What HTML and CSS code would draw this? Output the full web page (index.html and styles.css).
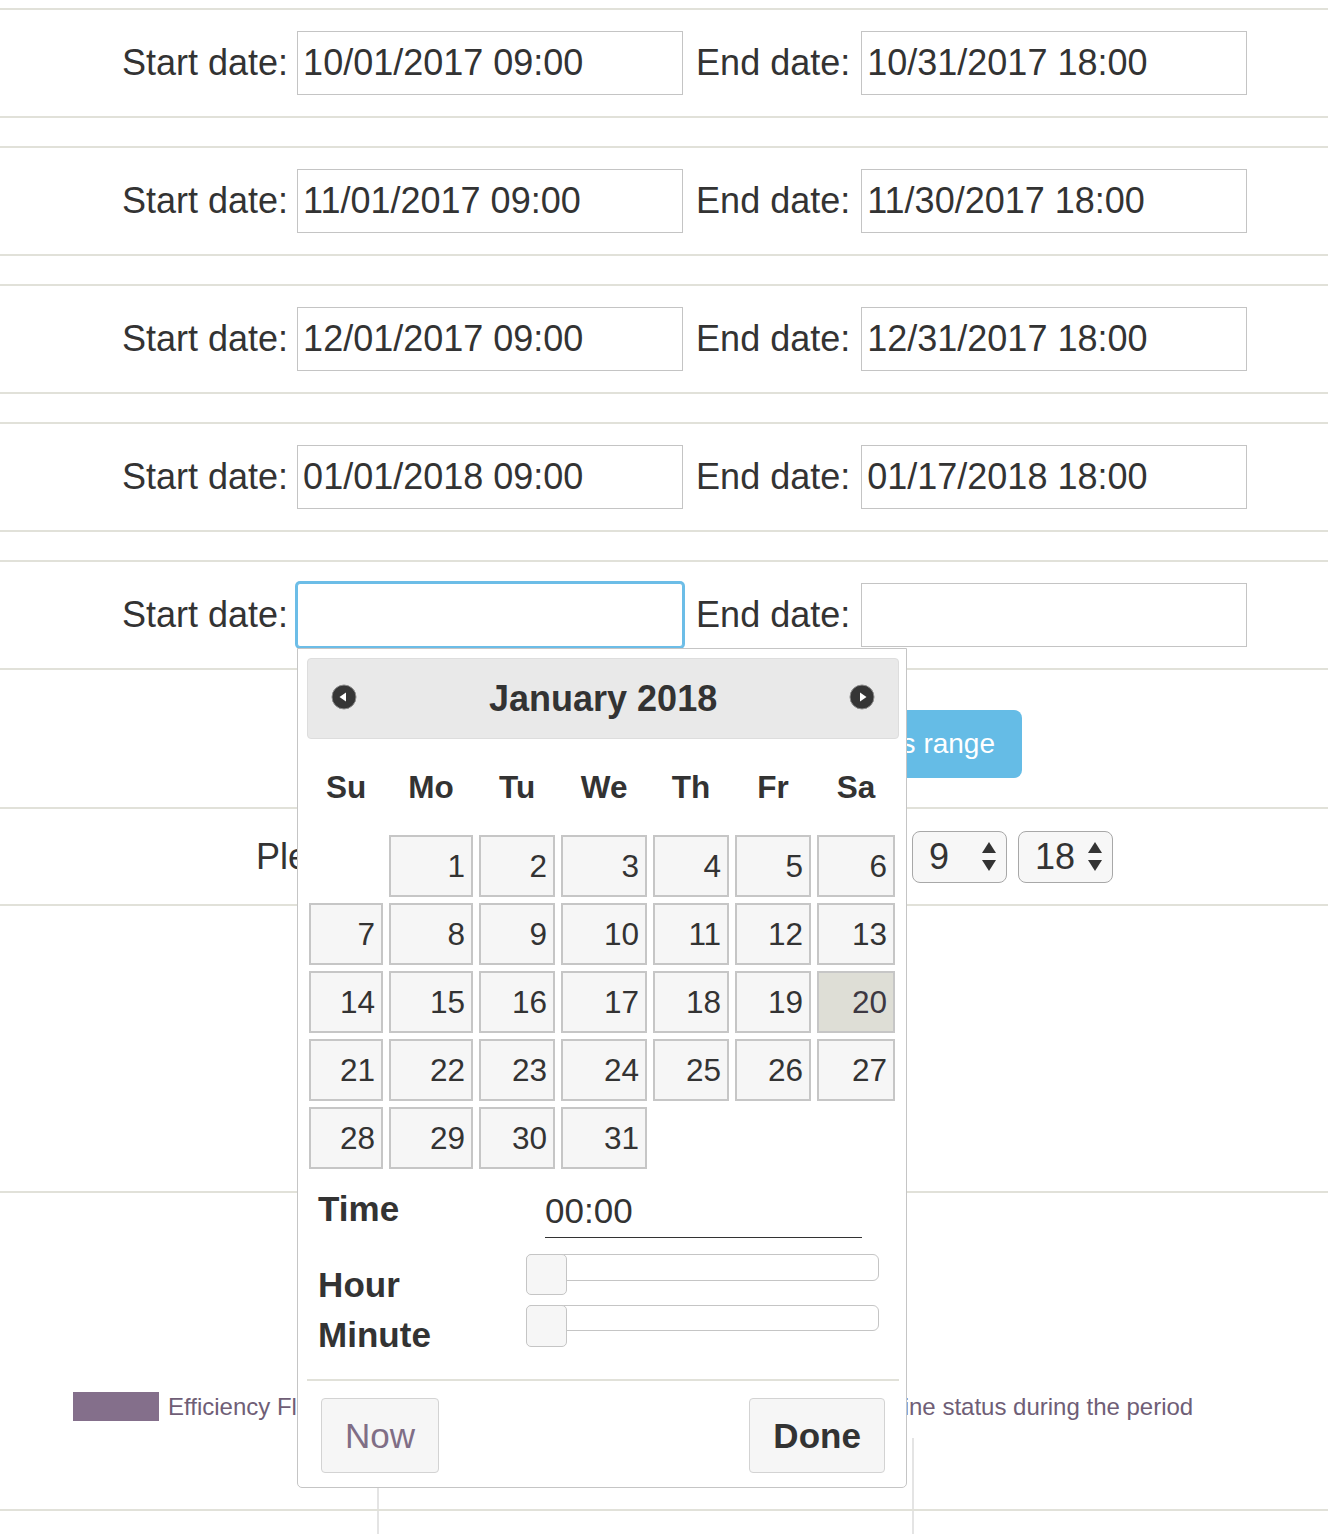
FILE: index.html
```html
<!DOCTYPE html>
<html>
<head>
<meta charset="utf-8">
<link rel="stylesheet" href="styles.css">
</head>
<body>
<div class="page">
  <div class="date-row">
    <span class="field-label">Start date:</span>
    <div class="date-input">10/01/2017 09:00</div>
    <span class="field-label end-label">End date:</span>
    <div class="date-input end-input">10/31/2017 18:00</div>
  </div>
  <div class="date-row">
    <span class="field-label">Start date:</span>
    <div class="date-input">11/01/2017 09:00</div>
    <span class="field-label end-label">End date:</span>
    <div class="date-input end-input">11/30/2017 18:00</div>
  </div>
  <div class="date-row">
    <span class="field-label">Start date:</span>
    <div class="date-input">12/01/2017 09:00</div>
    <span class="field-label end-label">End date:</span>
    <div class="date-input end-input">12/31/2017 18:00</div>
  </div>
  <div class="date-row">
    <span class="field-label">Start date:</span>
    <div class="date-input">01/01/2018 09:00</div>
    <span class="field-label end-label">End date:</span>
    <div class="date-input end-input">01/17/2018 18:00</div>
  </div>
  <div class="date-row last">
    <span class="field-label">Start date:</span>
    <div class="input-wrap">
      <div class="date-input focused"></div>
      <div class="datepicker">
        <div class="dp-header">
          <svg class="dp-nav prev" width="26" height="26" viewBox="0 0 26 26"><circle cx="13" cy="13" r="12" fill="#353535" stroke="#8a8a8a" stroke-width="1"/><polygon points="8.5,13 15,8.5 15,17.5" fill="#ffffff"/></svg>
          <div class="dp-title">January 2018</div>
          <svg class="dp-nav next" width="26" height="26" viewBox="0 0 26 26"><circle cx="13" cy="13" r="12" fill="#353535" stroke="#8a8a8a" stroke-width="1"/><polygon points="17.5,13 11,8.5 11,17.5" fill="#ffffff"/></svg>
        </div>
        <div class="dp-grid">
          <div class="dow">Su</div><div class="dow">Mo</div><div class="dow">Tu</div><div class="dow">We</div><div class="dow">Th</div><div class="dow">Fr</div><div class="dow">Sa</div>
          <div class="blank"></div><div class="day">1</div><div class="day">2</div><div class="day">3</div><div class="day">4</div><div class="day">5</div><div class="day">6</div>
          <div class="day">7</div><div class="day">8</div><div class="day">9</div><div class="day">10</div><div class="day">11</div><div class="day">12</div><div class="day">13</div>
          <div class="day">14</div><div class="day">15</div><div class="day">16</div><div class="day">17</div><div class="day">18</div><div class="day">19</div><div class="day today">20</div>
          <div class="day">21</div><div class="day">22</div><div class="day">23</div><div class="day">24</div><div class="day">25</div><div class="day">26</div><div class="day">27</div>
          <div class="day">28</div><div class="day">29</div><div class="day">30</div><div class="day">31</div><div class="blank"></div><div class="blank"></div><div class="blank"></div>
        </div>
        <div class="tp">
          <div class="tp-row tp-time">
            <div class="tp-label tp-time-label">Time</div>
            <div class="tp-value">00:00</div>
          </div>
          <div class="tp-row tp-sliders">
            <div class="tp-labels">
              <div class="tp-line">Hour</div>
              <div class="tp-line">Minute</div>
            </div>
            <div class="tp-slider-col">
              <div class="slider first"><div class="track"></div><div class="handle"></div></div>
              <div class="slider second"><div class="track"></div><div class="handle"></div></div>
            </div>
          </div>
        </div>
        <div class="dp-sep"></div>
        <div class="dp-buttons">
          <div class="dp-btn now">Now</div>
          <div class="dp-btn done">Done</div>
        </div>
      </div>
    </div>
    <span class="field-label end-label">End date:</span>
    <div class="date-input end-input"></div>
  </div>
  <div class="btn-row">
    <div class="btn-range">Calculate this range</div>
  </div>
  <div class="hours-row">
    <span class="hours-label">Please select the daily working hours:</span>
    <div class="spin first"><span class="spin-val">9</span><svg class="spin-arrows" width="16" height="32" viewBox="0 0 16 32"><polygon points="8,1 15,12 1,12" fill="#333"/><polygon points="1,19 15,19 8,30" fill="#333"/></svg></div>
    <div class="spin second"><span class="spin-val">18</span><svg class="spin-arrows" width="16" height="32" viewBox="0 0 16 32"><polygon points="8,1 15,12 1,12" fill="#333"/><polygon points="1,19 15,19 8,30" fill="#333"/></svg></div>
  </div>
  <div class="empty-row"></div>
  <div class="legend-row">
    <div class="legend">
      <div class="legend-item first"><span class="swatch"></span><span class="legend-text">Efficiency Flow</span></div>
      <div class="legend-item"><span class="swatch"></span><span class="legend-text">Machine status during the period</span></div>
    </div>
    <div class="chart">
      <div class="vline v1"></div>
      <div class="vline v2"></div>
      <div class="hline"></div>
    </div>
  </div>
</div>
</body>
</html>
```

FILE: styles.css
```css
html, body {
  margin: 0;
  padding: 0;
  overflow: hidden;
  background: #ffffff;
}
body {
  font-family: "Liberation Sans", Arial, Helvetica, sans-serif;
  color: #333333;
}
.page {
  width: 1328px;
  padding-top: 8px;
}

/* date rows */
.date-row {
  box-sizing: border-box;
  height: 110px;
  border-top: 2px solid #e1e1d9;
  border-bottom: 2px solid #e1e1d9;
  margin-bottom: 28px;
  display: flex;
  align-items: center;
  padding-left: 122px;
  font-size: 36px;
}
.date-row.last {
  margin-bottom: 0;
}
.field-label {
  white-space: nowrap;
}
.end-label {
  margin-left: 13px;
}
.date-input {
  box-sizing: border-box;
  width: 386px;
  height: 64px;
  border: 1px solid #c4c4c4;
  padding: 0 5px;
  margin-left: 9px;
  line-height: 62px;
  white-space: nowrap;
  background: #ffffff;
}
.date-input.end-input {
  margin-left: 11px;
}
.input-wrap {
  position: relative;
  margin-left: 9px;
  width: 386px;
  height: 64px;
}
.input-wrap .date-input {
  margin-left: 0;
}
.date-input.focused {
  border-color: #6cbde7;
  border-radius: 3px;
  box-shadow: 0 0 0 2px #6cbde7;
}

/* datepicker */
.datepicker {
  position: absolute;
  left: 0;
  top: 65px;
  z-index: 10;
  box-sizing: border-box;
  width: 610px;
  background: #ffffff;
  border: 1px solid #c5c5c5;
  border-radius: 0 0 5px 5px;
  padding: 9px 7px 14px 9px;
  font-size: 35px;
  color: #333333;
}
.dp-header {
  box-sizing: border-box;
  height: 81px;
  background: #e9e9e9;
  border: 1px solid #dddddd;
  border-radius: 4px;
  display: grid;
  grid-template-columns: 1fr auto 1fr;
  align-items: center;
  padding: 0 23px 0 23px;
}
.dp-nav.prev {
  justify-self: start;
}
.dp-nav.next {
  justify-self: end;
}
.dp-nav {
  display: block;
  margin-top: -3px;
}
.dp-title {
  font-size: 36px;
  font-weight: bold;
  line-height: 79px;
  text-align: center;
}
.dp-grid {
  margin-left: 2px;
  width: 586px;
  display: grid;
  grid-template-columns: 74px 84px 76px 86px 76px 76px 78px;
  grid-template-rows: 90px repeat(5, 62px);
  column-gap: 6px;
  row-gap: 6px;
  font-size: 31.5px;
}
.dow {
  box-sizing: border-box;
  height: 90px;
  padding-top: 6px;
  line-height: 84px;
  text-align: center;
  font-weight: bold;
}
.day {
  box-sizing: border-box;
  height: 62px;
  border: 2px solid #c6c6c6;
  background: #f6f6f6;
  text-align: right;
  padding-right: 6px;
  line-height: 58px;
}
.day.today {
  background: #deded6;
  color: #3d3842;
}

/* timepicker */
.tp {
  padding-left: 11px;
}
.tp-row {
  display: grid;
  grid-template-columns: 208px 353px;
}
.tp-time {
  height: 76px;
}
.tp-label {
  font-weight: bold;
}
.tp-time-label {
  padding-top: 20px;
  line-height: 40px;
}
.tp-value {
  box-sizing: border-box;
  margin-left: 19px;
  width: 317px;
  height: 69px;
  padding-top: 22px;
  padding-bottom: 6px;
  line-height: 40px;
  border-bottom: 1px solid #333333;
}
.tp-labels {
  padding-top: 15px;
  font-weight: bold;
}
.tp-line {
  line-height: 50px;
}
.slider {
  position: relative;
  height: 41px;
}
.slider.first {
  margin-top: 8px;
}
.slider.second {
  margin-top: 7px;
  height: 42px;
}
.track {
  box-sizing: border-box;
  margin-top: 9px;
  height: 27px;
  border: 1px solid #c5c5c5;
  border-radius: 6px;
  background: #ffffff;
}
.slider.second .track {
  margin-top: 10px;
  height: 26px;
}
.handle {
  position: absolute;
  left: 0;
  top: 0;
  box-sizing: border-box;
  width: 41px;
  height: 41px;
  border: 1px solid #c5c5c5;
  border-radius: 5px;
  background: #f6f6f6;
}
.slider.second .handle {
  height: 42px;
}
.dp-sep {
  margin-top: 19px;
  height: 2px;
  background: #e1e1d9;
}
.dp-buttons {
  margin-top: 17px;
  display: flex;
  justify-content: space-between;
  padding: 0 14px;
}
.dp-btn {
  box-sizing: border-box;
  height: 75px;
  line-height: 73px;
  border: 1px solid #d3d3d3;
  border-radius: 4px;
  background: #f6f6f6;
  font-size: 35px;
  text-align: center;
}
.dp-btn.now {
  width: 118px;
  color: #806e86;
}
.dp-btn.done {
  width: 136px;
  font-weight: bold;
  color: #333333;
}

/* button row */
.btn-row {
  box-sizing: border-box;
  height: 139px;
  border-bottom: 2px solid #e1e1d9;
  display: flex;
  justify-content: flex-end;
  align-items: flex-start;
  padding-top: 40px;
  padding-right: 306px;
}
.btn-range {
  box-sizing: border-box;
  height: 68px;
  line-height: 68px;
  padding: 0 27px;
  background: #65bce6;
  color: #ffffff;
  font-size: 28px;
  border-radius: 8px;
  white-space: nowrap;
}

/* hours row */
.hours-row {
  box-sizing: border-box;
  height: 97px;
  border-bottom: 2px solid #e1e1d9;
  display: flex;
  align-items: center;
  padding-left: 256px;
  font-size: 36px;
}
.hours-label {
  width: 41px;
  margin-right: 605px;
  white-space: nowrap;
  overflow: hidden;
}
.spin {
  box-sizing: border-box;
  height: 52px;
  width: 95px;
  border: 1px solid #a8a8a8;
  border-radius: 8px;
  background: #f7f7f7;
  display: flex;
  align-items: center;
  justify-content: space-between;
  padding: 0 9px 0 16px;
}
.spin.first {
  margin-left: 10px;
}
.spin.second {
  margin-left: 11px;
}
.spin-val {
  line-height: 50px;
}
.spin-arrows {
  display: block;
}

/* empty row */
.empty-row {
  box-sizing: border-box;
  height: 287px;
  border-bottom: 2px solid #e1e1d9;
}

/* legend */
.legend-row {
  padding-top: 199px;
}
.legend {
  display: flex;
  align-items: center;
  padding-left: 73px;
  font-size: 24px;
  color: #6f5e76;
}
.legend-item {
  display: flex;
  align-items: center;
}
.legend-item.first {
  width: 677px;
}
.swatch {
  display: block;
  width: 86px;
  height: 29px;
  background: #846f8b;
}
.legend-text {
  margin-left: 9px;
  white-space: nowrap;
}
.chart {
  position: relative;
  margin-top: 17px;
  height: 96px;
}
.vline {
  position: absolute;
  top: 0;
  bottom: 0;
  width: 2px;
  background: #e4e4e4;
}
.vline.v1 {
  left: 377px;
}
.vline.v2 {
  left: 912px;
}
.hline {
  position: absolute;
  left: 0;
  right: 0;
  top: 71px;
  height: 2px;
  background: #e1e1d9;
}
```
